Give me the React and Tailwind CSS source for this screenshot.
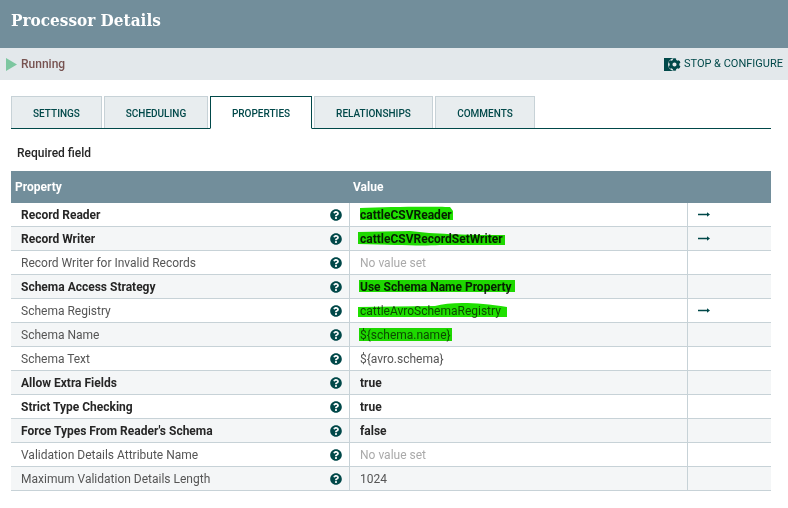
import React from "react";
import { FaQuestionCircle, FaCog } from "react-icons/fa";

const Q = () => <FaQuestionCircle className="text-[#004849] text-[12px]" />;

const Arrow = () => (
  <svg width="12" height="5" viewBox="0 0 12 5" className="block">
    <path d="M0 1.8h9V0.2L12 2.5 9 4.8V3.2H0z" fill="#004849" />
  </svg>
);

const HL = ({ d }) => (
  <svg width="338" height="24" viewBox="0 0 338 24" className="absolute left-0 top-0 pointer-events-none mix-blend-multiply">
    <path d={d} fill="#1fe000" />
  </svg>
);

const rows = [
  { p: "Record Reader", v: "cattleCSVReader", bold: true, vBold: true, arrow: true, hl: "M10 5C40 3.5 85 3.5 100 4L103 8V17H10Z" },
  { p: "Record Writer", v: "cattleCSVRecordSetWriter", bold: true, vBold: true, arrow: true, hl: "M8 5L60 4C85 7 110 8 155 8V18H90C70 19 50 18 8 17Z" },
  { p: "Record Writer for Invalid Records", v: "No value set", muted: true },
  { p: "Schema Access Strategy", v: "Use Schema Name Property", bold: true, vBold: true, hl: "M9 5H165V17H9Z" },
  { p: "Schema Registry", v: "cattleAvroSchemaRegistry", arrow: true, hl: "M8 8L85 7C100 3 125 3 157 8V18H8Z" },
  { p: "Schema Name", v: "${schema.name}", hl: "M9 5H102V18H9Z" },
  { p: "Schema Text", v: "${avro.schema}" },
  { p: "Allow Extra Fields", v: "true", bold: true, vBold: true },
  { p: "Strict Type Checking", v: "true", bold: true, vBold: true },
  { p: "Force Types From Reader's Schema", v: "false", bold: true, vBold: true },
  { p: "Validation Details Attribute Name", v: "No value set", muted: true },
  { p: "Maximum Validation Details Length", v: "1024" },
];

const tabs = [
  { t: "Settings", w: "w-[91px]" },
  { t: "Scheduling", w: "w-[104px]" },
  { t: "Properties", w: "w-[102px]", active: true },
  { t: "Relationships", w: "w-[119px]" },
  { t: "Comments", w: "w-[100px]" },
];

export default function App() {
  return (
    <div className="w-[788px] h-[508px] bg-white overflow-hidden font-['Roboto',sans-serif] text-[12px] text-[#262626]">
      <div className="h-12 bg-[#728e9b] flex items-center pl-[11px] pb-[6px]">
        <h1 className="font-['DejaVu_Serif_Condensed','DejaVu_Serif',serif] font-bold text-[17px] text-white">Processor Details</h1>
      </div>
      <div className="h-8 bg-[#e3e8eb] flex items-center justify-between pl-[6px] pr-[5px]">
        <div className="flex items-center gap-1">
          <svg width="11" height="13" viewBox="0 0 11 13"><path d="M0 0L11 6.5L0 13Z" fill="#7dc7a0" /></svg>
          <span className="font-medium text-[#775351]">Running</span>
        </div>
        <div className="flex items-center gap-[3px] text-[#004849] text-[11px]">
          <span className="flex items-center">
            <span className="w-[9px] h-[13px] bg-[#004849]" />
            <FaCog className="-ml-[5px] w-[13px] h-[13px] text-[#004849] bg-[#e3e8eb] rounded-full" />
          </span>
          <span className="pt-[1px]">STOP &amp; CONFIGURE</span>
        </div>
      </div>
      <div className="ml-[11px] w-[760px] mt-4 h-[33px] flex gap-[2px] border-b border-[#004849] box-border">
        {tabs.map((x) => (
          <div
            key={x.t}
            className={
              x.active
                ? `${x.w} h-[33px] box-border pt-[1px] flex items-center justify-center uppercase font-medium text-[10px] text-[#004849] bg-white border border-[#004849] border-b-white`
                : `${x.w} h-[32px] box-border pt-[1px] flex items-center justify-center uppercase font-medium text-[10px] text-[#004849] bg-[#e8edef] border border-b-0 border-[#c7d2d7]`
            }
          >
            {x.t}
          </div>
        ))}
      </div>
      <div className="pl-[17px] mt-[16px] h-[16px] leading-[16px] font-medium text-[#262626]">Required field</div>
      <div className="ml-[11px] w-[760px] mt-[10px]">
        <div className="h-8 bg-[#728e9b] grid grid-cols-[339px_338px_83px] items-center text-white font-bold">
          <div className="pl-1">Property</div>
          <div className="pl-[3px]">Value</div>
          <div />
        </div>
        {rows.map((r, i) => (
          <div
            key={r.p}
            className={`h-6 box-border grid grid-cols-[339px_338px_83px] border-b border-[#c7d2d7] ${i % 2 ? "bg-[#f4f6f7]" : "bg-white"}`}
          >
            <div className={`flex items-center justify-between pl-[10px] pr-[7px] border-r border-[#c7d2d7] ${r.bold ? "font-bold text-[#262626]" : "text-[#555]"}`}>
              <span>{r.p}</span>
              <Q />
            </div>
            <div
              className={`relative flex items-center pl-[10px] border-r border-[#c7d2d7] ${
                r.muted ? "text-[#aaa]" : r.vBold ? "font-bold text-[#262626]" : "text-[#555]"
              }`}
            >
              <span>{r.v}</span>
              {r.hl && <HL d={r.hl} />}
            </div>
            <div className="flex items-center pl-[10px]">{r.arrow && <Arrow />}</div>
          </div>
        ))}
      </div>
    </div>
  );
}
